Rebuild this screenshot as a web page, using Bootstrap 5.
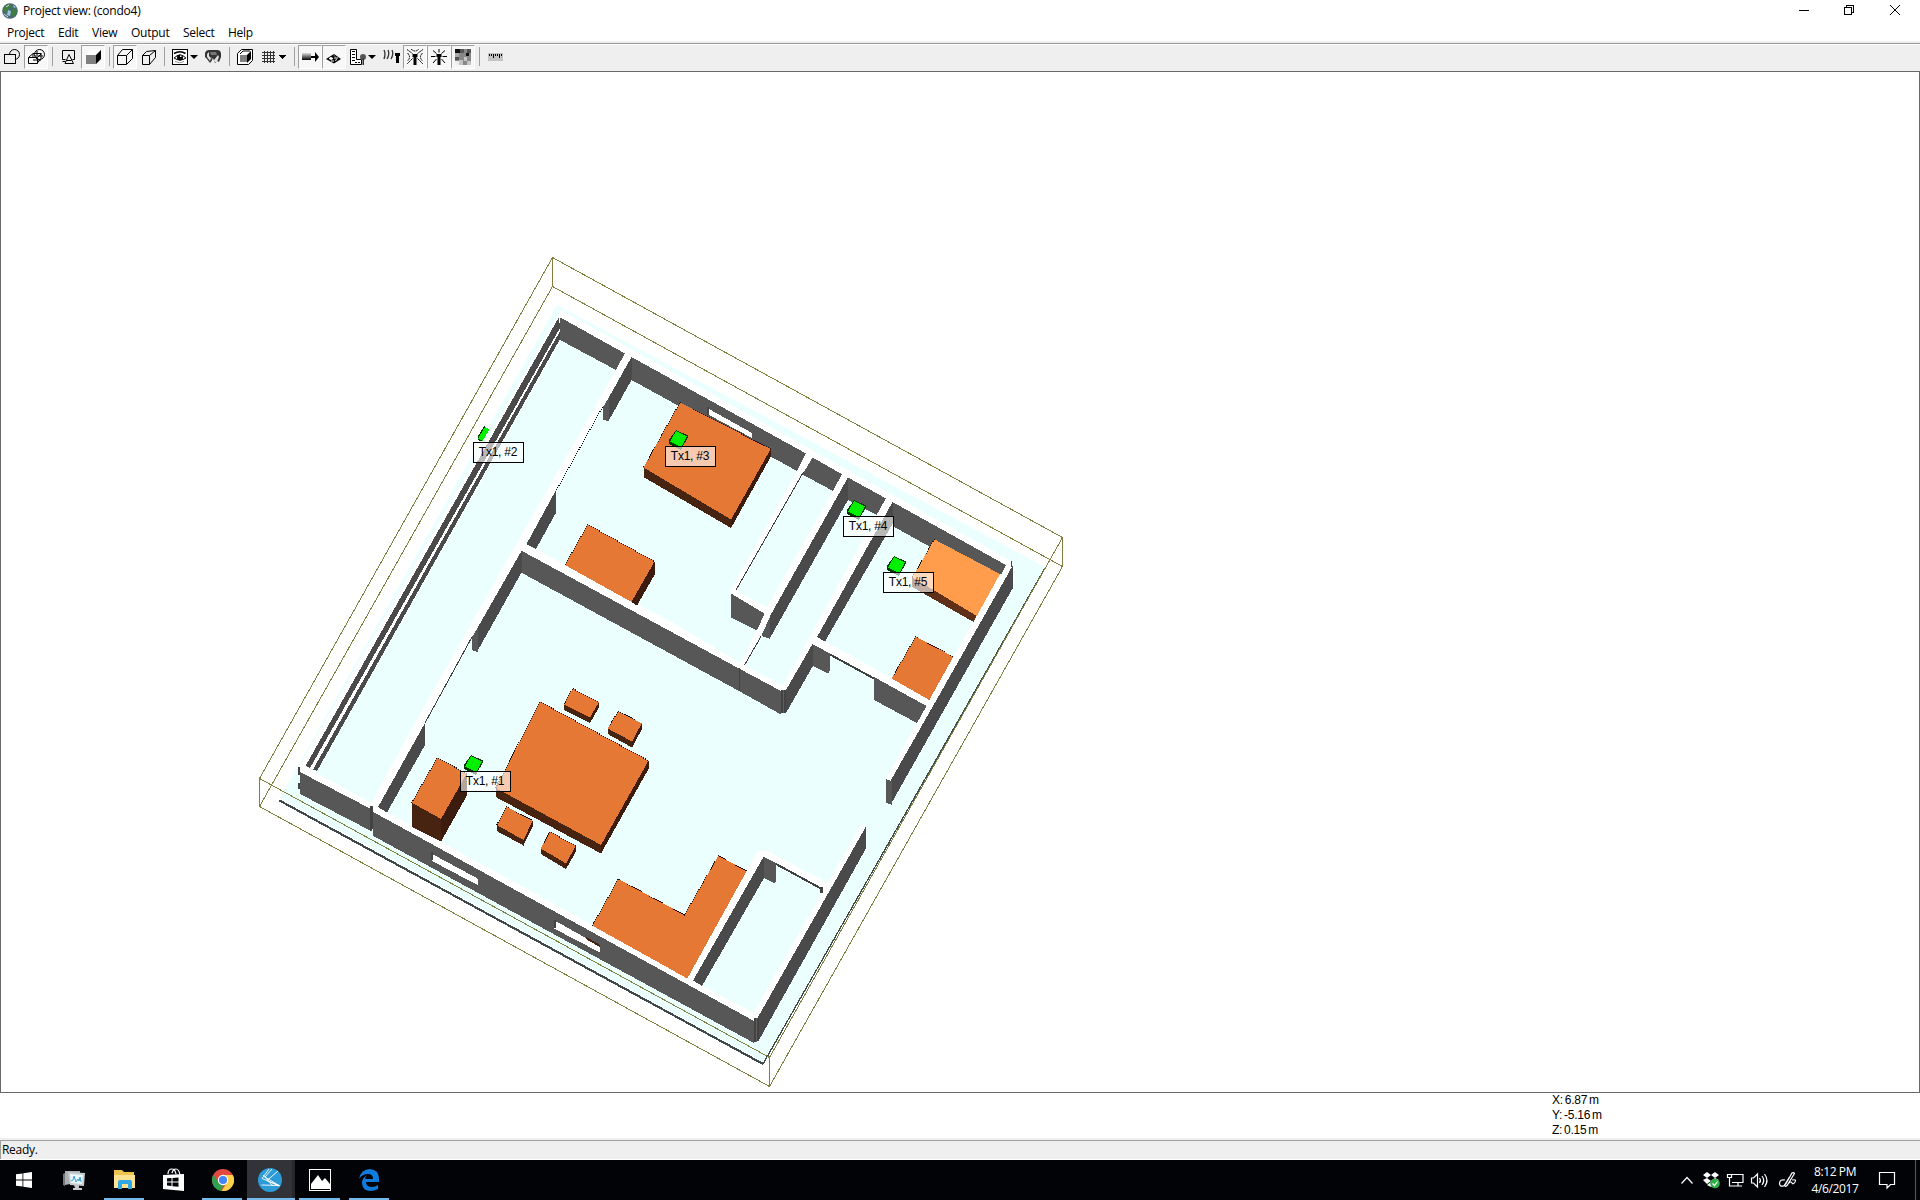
<!DOCTYPE html>
<html lang="en">
<head>
<meta charset="utf-8">
<title>Project view: (condo4)</title>
<link href="https://cdn.jsdelivr.net/npm/bootstrap@5.3.0/dist/css/bootstrap.min.css" rel="stylesheet">
<style>
body{font-family:"Open Sans","Noto Sans",sans-serif;font-size:12px;line-height:16px;color:#000;background:#fff;height:1200px;width:1920px}
.titlebar{height:22px;padding-left:2px}
.titlebar .caption{font-size:12px;letter-spacing:-.22px;margin-left:5px}
.winctl svg{display:block}
.menubar{height:19px;padding-left:7px;font-size:12px;letter-spacing:-.25px;line-height:22px}
.menubar a{color:#000;text-decoration:none;display:block;white-space:nowrap}
.toolstrip{height:30px;background:#efefef;position:relative;border-top:2px solid #efefef;border-bottom:1px solid #efefef}
.toolrow{border-top:1px solid #9a9a9a;box-shadow:inset 0 1px #fff;height:28px;padding-top:1px}
.tool{width:24px;height:24px;display:flex;align-items:center;justify-content:center;border:1px solid transparent;border-radius:0;padding:0;background:none;flex:none}
.tool.wide{width:33px}
.tool.on{background:#f7f7f7;border-color:#a0a0a0 #fff #fff #a0a0a0}
.sepbar{width:8px;flex:none;display:flex;justify-content:center}
.sepbar i{width:1px;height:19px;background:#a0a0a0;margin-top:2px}
.viewport{height:1022px;border:1px solid #696969;border-left-width:1px;background:#fff;overflow:hidden}
.txlabel{width:51px;height:21px;border:1px solid #000;background:rgba(255,255,255,.61);font:12px/18px "Liberation Sans",sans-serif;letter-spacing:-.25px;text-align:center;white-space:nowrap;padding-right:1px}
.readout{height:45px;padding:0 0 0 1552px;font:12px/15px "Liberation Sans",sans-serif;letter-spacing:-.25px;word-spacing:-1.2px}
.statusline{height:22px;background:#efefef;border-top:2px solid #efefef;border-bottom:1px solid #fff}
.statusline div{border-top:1px solid #a0a0a0;border-left:1px solid #a0a0a0;height:19px;padding-left:1px;line-height:18px;letter-spacing:-.3px}
.taskbar{height:40px;background:#010306;color:#fff}
.task{width:49px;height:40px;display:flex;align-items:center;justify-content:center;position:relative;flex:none}
.task.open::after{content:"";position:absolute;left:4px;right:5px;bottom:0;height:2px;background:#76b9ed}
.task.active{background:#313338;border-right:3px solid #25272b}
.task.active::after{left:0;right:-3px}
.tray svg{display:block}
.clock{font-size:12px;line-height:17px;letter-spacing:-.4px;width:60px;text-align:center}
</style>
<script src="https://cdn.jsdelivr.net/npm/bootstrap@5.3.0/dist/js/bootstrap.bundle.min.js"></script>
</head>
<body class="d-flex flex-column overflow-hidden">
<header class="titlebar d-flex align-items-center justify-content-between">
  <div class="d-flex align-items-center">
    <svg width="16" height="16" viewBox="0 0 16 16"><circle cx="8" cy="8" r="7.800" fill="#4a6878"/><path d="M3 3l4-2 3 1-1 3-3 2-3 3-2-3zM10 7l4-2 1 4-3 5-3-2z" fill="#3f7f42"/><path d="M6 7l3 1-1 5-3-1zM11 2l3 2-2 1z" fill="#9cc7de"/><path d="M2 11l4 3M4 4l3-2" stroke="#d5e3e4" fill="none"/></svg>
    <span class="caption">Project view: (condo4)</span>
  </div>
  <div class="winctl">
    <svg width="130" height="22" viewBox="1790 0 130 22" fill="none" stroke="#000" shape-rendering="crispEdges"><path d="M1799 10.500h10"/><rect x="1844.500" y="7.500" width="7" height="7"/><path d="M1846.500 7V5.500h7v7h-2"/><path d="M1890 5l10 10M1900 5l-10 10" shape-rendering="auto"/></svg>
  </div>
</header>
<nav class="menubar d-flex">
  <a style="width:51px">Project</a><a style="width:34px">Edit</a><a style="width:39px">View</a><a style="width:52px">Output</a><a style="width:45px">Select</a><a>Help</a>
</nav>
<div class="toolstrip">
 <div class="toolrow d-flex">
  <div class="tool"><svg width="16" height="16" fill="none" stroke="#000"><circle cx="10.500" cy="5.500" r="5"/><rect x=".5" y="5.500" width="11" height="9" fill="#efefef"/></svg></div>
  <div class="tool on"><svg width="17" height="16" fill="none" stroke="#000"><circle cx="11.500" cy="5.500" r="5"/><path d="M.5 8.500L5 4.500h8v5l-4 5M.5 8.500h9v6H.5zM9.500 8.500l4-4M5 5v3M5 11h8M9 2v4M7 7h8"/></svg></div>
  <div class="sepbar"><i></i></div>
  <div class="tool" style="width:25px"><svg width="14" height="15" fill="none" stroke="#000"><path d="M3.500 9.500h-3V.5h12v9h-2M.5 11.500h3M7 4.500l-4 9h8.500zM4.500 10.500h5"/></svg></div>
  <div class="tool on"><svg width="16" height="16"><path d="M1 6L5 1h11L11 6z" fill="#fff"/><rect x="1" y="6" width="10" height="9" fill="#808080"/><path d="M11 6l5-5v9l-5 5z"/></svg></div>
  <div class="sepbar"><i></i></div>
  <div class="tool on"><svg width="16" height="16" fill="none" stroke="#000"><path d="M.5 6.500h9v9h-9zM.5 6.500l5-6h10l-6 6M15.500.5v9l-6 6"/></svg></div>
  <div class="tool"><svg width="14" height="15" fill="none" stroke="#000"><path d="M.5 5.500h7v9h-7zM.5 5.500l4-4 9-1-6 5M13.500.5v7l-6 7"/></svg></div>
  <div class="sepbar" style="width:7px"><i></i></div>
  <div class="tool wide"><svg width="26" height="16"><rect x=".5" y=".5" width="15" height="15" fill="#fff" stroke="#000"/><path d="M2 4.500q6-3.500 11.500 0" fill="none" stroke="#000" stroke-width="1.500"/><path d="M2 9q6-6 12 0-6 4-12 0" fill="none" stroke="#000"/><circle cx="8" cy="8.500" r="3"/><path d="M8 6.500h1.500V8H8z" fill="#fff"/><path d="M3 12.500q5 2.500 9 0" stroke="#999" fill="none"/><path d="M18 6h8l-4 4z"/></svg></div>
  <div class="tool"><svg width="16" height="16"><path d="M0 4q1-3 4-3h8q4 0 4 4v3l-2 5-2-1-2 2-2-4-3 4-3-4-2-2z" fill="#333"/><path d="M2 5l2-2v4l2 2-1 3-3-4zM6 8l3 3 4-5 1 2-2 5h-2l-2-1z" fill="#ddd"/><path d="M5 3h6l1 3H6z" fill="#777"/></svg></div>
  <div class="sepbar"><i></i></div>
  <div class="tool"><svg width="16" height="16"><path d="M.5 4.500l4-4h11v11l-4 4H.5z" fill="#fff" stroke="#000"/><path d="M3 6h7v7H3z" fill="#808080"/><path d="M10 6l4-4v8l-4 4z"/><path d="M3 5l3-3h7" stroke="#000" fill="none"/></svg></div>
  <div class="tool wide"><svg width="24" height="14" shape-rendering="crispEdges"><path d="M2.500 1v12M5.500 1v12M8.500 1v12M11.500 1v12M0 2.500h13M0 5.500h13M0 8.500h13M0 11.500h13" stroke="#333"/><path d="M16 5h8l-4 4z"/></svg></div>
  <div class="sepbar"><i></i></div>
  <div class="tool on"><svg width="17" height="14"><defs><linearGradient id="fade" x2="0" y2="1"><stop stop-color="#ddd"/><stop offset="1"/></linearGradient></defs><rect y="3" width="9" height="7" fill="url(#fade)"/><path d="M9 6h4V2l4 5-4 5V8H9z"/></svg></div>
  <div class="tool on"><svg width="16" height="16"><path d="M0 10l8-5 7 5-7 4.500z"/><path d="M3 9.500l2-1 2 1-2 1zM8 9h4M8 6.500l1 1M9 11.500l2-1M5 12h3" fill="#fff" stroke="#fff"/></svg></div>
  <div class="tool wide"><svg width="26" height="16"><path d="M.5 15.500V.5h6v10h5v5z" fill="#fff" stroke="#000"/><path d="M3.500 2v12" stroke="#000" stroke-width="3" stroke-dasharray="1 2"/><path d="M5 13.500h7" stroke="#000" stroke-dasharray="2 1"/><circle cx="13" cy="8" r="3" fill="#555"/><path d="M12.500 9h1.500v7h-1.500z" fill="#333"/><path d="M18 6h8l-4 4z"/></svg></div>
  <div class="tool"><svg width="17" height="16" fill="none" stroke="#333" stroke-width="1.300"><path d="M1 1q2 4 0 9M5 1q2 4-1 9M9 1q2 4-1 9"/><path d="M12 4h5v3h-1v7h-3V7h-1z" fill="#000" stroke="none"/></svg></div>
  <div class="tool on"><svg width="16" height="16" fill="none" stroke="#000"><path d="M0 .5l5.500 4M16 .5l-5.500 4M4 0q4 4 8 0M.5 4q4 4 0 8M15.500 4q-4 4 0 8M5.500 9.500L0 15M10.500 9.500L16 15" stroke-dasharray="2 .7"/><path d="M5.500 5h5v3H9.500v8h-3V8h-1z" fill="#000" stroke="none"/></svg></div>
  <div class="tool on"><svg width="16" height="16" fill="none" stroke="#000"><path d="M8 0v3.500M2 1.500l3.500 3M14 1.500l-3.500 3M0 7.500h4.500M11.500 7.500H16M2 14l3.500-4M14 14l-3.500-4"/><path d="M5.500 5h5v3H9.500v8h-3V8h-1z" fill="#000" stroke="none"/></svg></div>
  <div class="tool on"><svg width="16" height="16" shape-rendering="crispEdges"><rect width="16" height="16" fill="#888"/><path d="M0 0h5v4H0zM11 4h3v3h-3z" fill="#111"/><path d="M5 0h4v4H5zM12 0h4v4h-4zM0 8h4v3H0z" fill="#555"/><path d="M9 8h3v4H9zM4 11h4v5H4zM12 12h4v4h-4z" fill="#c4c4c4"/><path d="M0 12h4v4H0z" fill="#eee"/><path d="M0 4h4v4H0z" fill="#aaa"/></svg></div>
  <div class="sepbar"><i></i></div>
  <div class="tool"><svg width="15" height="8" shape-rendering="crispEdges"><rect width="15" height="8" fill="#c3c3c3"/><path d="M1.500 1v2M3.500 1v2M5.500 1v4M7.500 1v2M9.500 1v2M11.500 1v4M13.500 1v2" stroke="#000"/></svg></div>
 </div>
</div>

<main class="viewport position-relative">
<svg width="1918" height="1020" viewBox="1 72 1918 1020" shape-rendering="crispEdges" class="d-block">
 <defs>
  <g id="tx"><path d="M11-16L4-6v4L16 4l7-13v-1.500z" fill="#063806"/><path d="M11-15L22-9.500 16.500 1 5-4.500z" fill="#00f000"/></g>
 </defs>
 <!-- slab -->
 <path d="M557 305L1045 567 763 1062 280 798z" fill="#ebffff"/>
 <!-- outer wall tops -->
 <path d="M561 310L1011 561 1012.500 566 891 781 886 779 929 700 1001 573 1006 565 559.500 317 305 766 387 812 703 986 753.500 1013 861.500 824 866 827 757.500 1019 754 1021 373 812 371 809 300 772 299 767z" fill="#fff"/>
 <!-- balcony rail -->
 <path d="M560 317v24L317 771 305 766z" fill="#fff"/>
 <path d="M559 317L560 328 310 768 305.500 766zM559.500 332v8L317 771 313 769.500z" fill="#4a4a4a"/>
 <!-- inner faces of the north wall -->
 <path d="M559.500 317L625 353.500 616 370 560 340zM631.500 357L806 453.500 797 471 631.500 380zM812.500 457.500L842.500 474.500 833 491 802.500 474.500zM848 477.500L886 498.500 877 515 848 500zM892.500 502L1006 565 1001 574.500 1000 574 950 548 934 549 892.500 526z" fill="#575757"/>
 <path d="M709 409L752 433v5L709 415z" fill="#fff"/>
 <path d="M707 407h2v8h-2z" fill="#444"/>
 <!-- partition tops -->
 <g fill="#fff">
  <path d="M625 353L631.500 357 602.500 407 556 491 525 545 522 551 472 637 425 723 377 808 369 807 415 723 513 550 616 370z"/>
  <path d="M526 543.500L565 565 633 601.500 670 621 742 664 783 685.500 808 640 886 498 892.500 502 817 637 825 641.500 892 678 930 700 927 706 812 644 786 690 781 691 739 668.500 521.500 551z"/>
  <path d="M806 453L812.500 457.500 803 473 736 590 767 607.500 833 491 842 474 848 477.500 770 617 744.500 665 740 664 757 630 764.500 613.500 730 593 730 591 797 471z"/>
  <path d="M760 850.500L768 851 829 884 823 890 764 857 693 981 687 979 757 852z"/>
 </g>
 <!-- partition faces, shaded side -->
 <path d="M631.500 357v23L608.500 421v-23zM555.500 491v22.500L536 549 526.500 544zM521.500 551v21.500L477.500 651v-23zM425 723v22L387 812.500 378 807zM848 477.500V500L770 638v-22zM892.500 502v22L825 641.500 817 637zM812.500 644v22.500L786 713v-23zM764 856v22L702 986 693 980.500zM1012.500 566v22.500L891 804v-24zM865.700 827v22L759 1040 757.500 1018z" fill="#4a4a4a"/>
 <!-- partition faces, lit side -->
 <path d="M602.500 408L608.500 398v23.500l-6-2zM472 637L477.500 628v24l-5.500-2zM522 551L739 668.500 781 691v23.500L739 691 522 573zM731 593.500L764.500 613.500 757 630.500 731 617.500zM762 634L770 617v22l-8-3zM812.500 644L830 653.500V670l-2 3.500L812.500 666zM874 677L926.500 706 917 723 874 700zM764 857L776 863v18l-2 2L764 878zM886 779L891.500 781v23.500L886 803zM300 772L371 809v22L300 794zM373.300 812L754 1021v22L373.300 836z" fill="#575757"/>
 <path d="M298 767h2v8h-2zM298 783h2v6h-2zM370 806h3v23h-1v2h-2zM738.500 668h1v23h-1zM820 887h3v6h-3zM1011 561h1v6h-1zM781 690h1.500v23H781zM784 690h2v23h-2zM754 1018h1.500v24H754zM757 1018h2v23h-2z" fill="#434343"/>
 <path d="M782.500 690h1.500v23h-1.500zM755.500 1018h1.500v24h-1.500z" fill="#606060"/>
 <g fill="none" stroke="#404040">
  <path d="M472 637L425 723M803.500 472L736 590M761 636.500L744.500 665"/>
  <path d="M830 654.500L874 678.500M776 864L822 889" stroke-width="2"/>
  <path d="M602.500 407L556 491" stroke="#000" stroke-dasharray="1.140 1.140"/>
 </g>
 <!-- street-side windows -->
 <path d="M433 854.500L477.500 878.500V885L432 861zM556.500 921.500L600 946v6.500L554 928.500z" fill="#fff"/>
 <path d="M431 852h2v8h-2zM554 920h2v8h-2z" fill="#444"/><path d="M586 938l14 8" stroke="#472411" stroke-width="2"/>
 <!-- furniture: front sides -->
 <path d="M643.500 467.500L731 519.500V528L643.500 477zM564 704L590 717.500v5.500L564 710zM607.700 728L632 741.500v6L607.700 734zM495.700 788L601 845v8.500L495.700 797zM496.700 825L523.500 840v5.500L496.700 831zM540.700 848L566 863.500v5.500L540.700 854zM411.700 802.500L441 819v22.500L411.700 827z" fill="#472411"/>
 <path d="M912.300 577L977 615.500 973.500 622 912.300 587z" fill="#5f2f17"/>
 <!-- furniture: right sides -->
 <path d="M770.700 449v8L731 528v-9zM654.500 561.500V575L637 605.500 631.500 602zM598.700 702.500v5.500L590 723v-5.500zM641.700 723.500v6L632 747.500v-6zM648.500 760.500V769L601 853.500V845zM532.700 820.500v6L523.500 845.500V840zM575.700 846v6L566 869v-6zM466.700 773.500V796L441 841.500V819z" fill="#3b1c0e"/>
 <!-- furniture: tops -->
 <path d="M680 402.300L770.700 449 731 519.500 643.500 467.500zM587.700 524.500L654.500 561.500 631.500 602 565 565zM572.700 688.500L598.700 702.500 590 717.500 564 704.300zM618.300 711L641.700 723.500 632 741.500 607.700 728.500zM540 701.700L648.500 760.700 601 845 495.700 788zM506.700 806.700L532.700 820.700 523.500 840 496.700 825zM550 831.700L575.700 846 566 863.500 540.700 848.500zM437.300 757.700L466.700 773.500 441 819 411.700 802.700zM618.300 879L684.500 915 718.300 855.700 746.700 871 687.300 978.500 592.300 925.700zM915.700 636.700L953.300 656.700 929.300 700 891.700 678.500z" fill="#e57835"/>
 <path d="M934.300 539.300L1000 574 976.700 616 912.300 577.300z" fill="#ff9d4d"/>
 <path d="M643.500 467.500L680 402.300 770.700 449M565 565L587.700 524.500 654.500 561.500M564 704.300L572.700 688.500 598.700 702.500M607.700 728.500L618.300 711 641.700 723.500M495.700 788L540 701.700 648.500 760.700M496.700 825L506.700 806.700 532.700 820.700M540.700 848.500L550 831.700 575.700 846M411.700 802.700L437.300 757.700 466.700 773.500M592.300 925.700L618.300 879 684.500 915 718.300 855.700 746.700 871M891.700 678.500L915.700 636.700 953.300 656.700M912.300 577.300L934.300 539.300" fill="none" stroke="#1c0d05" stroke-dasharray="1.140 1.140"/>
 <!-- slab edge -->
 <path d="M279.500 800.500L763 1064" stroke="#404a4a" stroke-width="2.200"/>
 <path d="M763 1064L1045 568" stroke="#404a4a" stroke-width="1.300"/>
 <!-- bounding box -->
 <path d="M552.500 257.500L1062.500 537.500 769.500 1057.500 259.500 778.500zM552.500 286.500L1062.500 566.500 769.500 1086.500 259.500 806.500zM552.500 257.500v29M1062.500 537.500v29M769.500 1057.500v29M259.500 778.500v28" fill="none" stroke="#808040"/>
 <!-- transmitters -->
 <use href="#tx" x="665" y="446"/><use href="#tx" x="843" y="516"/><use href="#tx" x="883" y="572"/><use href="#tx" x="460" y="771"/>
 <path d="M484 426L489 429 482 441.500 477.500 440v-3z" fill="#063806"/><path d="M485 427L489.500 429.500 482.500 441 478 438.500z" fill="#00f000"/>
</svg>
<div class="txlabel position-absolute" style="left:472px;top:370px">Tx1, #2</div>
<div class="txlabel position-absolute" style="left:664px;top:374px">Tx1, #3</div>
<div class="txlabel position-absolute" style="left:842px;top:444px">Tx1, #4</div>
<div class="txlabel position-absolute" style="left:882px;top:500px">Tx1, #5</div>
<div class="txlabel position-absolute" style="left:459px;top:699px">Tx1, #1</div>
</main>

<section class="readout"><div>X: 6.87 m</div><div>Y: -5.16 m</div><div>Z: 0.15 m</div></section>
<footer class="statusline"><div>Ready.</div></footer>

<div class="taskbar d-flex justify-content-between">
 <div class="d-flex">
  <div class="task" style="width:48px"><svg width="16" height="16" fill="#fff"><path d="M0 2.300L6.500 1.400V7.500H0zM7.300 1.300L16 0v7.500H7.300zM0 8.400h6.500v6.200L0 13.700zM7.300 8.400H16V16l-8.700-1.200z"/></svg></div>
  <div class="task" style="width:52px"><svg width="24" height="22"><path d="M3 2h15v11l-15 3z" fill="#aab0b2"/><path d="M1 5l2-1v13l-2-1z" fill="#777"/><path d="M6 3l17 1-1 13-14-1z" fill="#c9cdce"/><path d="M8 5l13 1-1 9-11-1z" fill="#eaf8ff"/><path d="M9 12l2-1 1-4 2 6 2-3 1 2 1-4 1 5" fill="none" stroke="#3a9ed1"/><path d="M12 16h5v3h3v2h-9v-2h2z" fill="#c5c8c9"/></svg></div>
  <div class="task open"><svg width="22" height="20"><path d="M0 2V0h8l2 2h10v16H0z" fill="#f0c34d"/><path d="M0 5h21v13H0z" fill="#fde391"/><path d="M4 19v-7q0-2 2-2h10q2 0 2 2v7h-4v-5H8v5z" fill="#2fa8e4"/></svg></div>
  <div class="task"><svg width="22" height="24"><path d="M5 6q0-5 4-5 3 0 4 5M9 5q1-4 4-4t4 6" fill="none" stroke="#fff" stroke-width="1.200"/><path d="M0 7l21-1v17L0 21z" fill="#fff"/><path d="M4 10.300l4.500-.3v3.500H4zM9.500 9.900l6-.4v4h-6zM4 14.500h4.500V18L4 17.600zM9.500 14.500h6v4.300l-6-.6z" fill="#010306"/></svg></div>
  <div class="task open"><svg width="22" height="22" viewBox="0 0 22 22"><circle cx="11" cy="11" r="11" fill="#e24a3f"/><path d="M1.500 5.500L6.500 14 11 16 9.500 22A11 11 0 0 1 1.500 5.500z" fill="#2da14d"/><path d="M11 6h9.800A11 11 0 0 1 9.500 22L15.500 13z" fill="#fdd045"/><circle cx="11" cy="11" r="5.200" fill="#fff"/><circle cx="11" cy="11" r="4.100" fill="#4285f4"/></svg></div>
  <div class="task open active" style="width:48px"><svg width="24" height="24" fill="none" stroke="#fff" stroke-width=".9"><circle cx="12" cy="12" r="12" fill="#2d9bd5" stroke="none"/><path d="M11 1L4 10.500 21 17.500 3.500 17M14 1L7 9 22 18M20 3L9 12.500 21 18M5 7l10 11"/></svg></div>
  <div class="task open" style="width:50px"><svg width="22" height="22"><rect x=".5" y=".5" width="21" height="21" fill="#010306" stroke="#fff"/><path d="M2 20v-5l7-9 4 6 3-3 5 6v5z" fill="#fff"/></svg></div>
  <div class="task open"><svg width="22" height="22" viewBox="0 0 22 22"><path d="M0 10Q2 0 11 0q9 1 9 9v4H7q0 5 6 5 3 0 6-2v4q-4 2-8 2-8-1-8-8 0-5 5-8-2 2-2 4h8q0-5-5-5Q3 5 0 10z" fill="#0f7bdc"/></svg></div>
 </div>
 <div class="tray d-flex align-items-center">
  <svg width="125" height="40" viewBox="1675 0 125 40" fill="none" stroke="#fff" stroke-width="1.200">
   <path d="M1681.500 23.500l5.500-6 5.500 6"/>
   <path d="M1703 15l4-3 4 3-4 3zM1711 15l4-3 4 3-4 3zM1703 20l4-2 4 3-4 3zM1711 21l4-3 4 2-4 3zM1707 25l4-3 4 3-4 2z" fill="#fff" stroke="none"/><circle cx="1715" cy="23.500" r="4.800" fill="#2fae49" stroke="none"/><path d="M1712.500 23.500l2 2 3-4"/>
   <path d="M1732 14.500h11v8h-11M1727.500 14.500h4v3h-4zM1729.500 17.500v8.500h5M1738 22.500v3M1734 26h8"/>
   <path d="M1751.500 18v5h2l4 4V14l-4 4zM1759.500 18q2 2.500 0 5M1762 16q3.500 4.500 0 9M1764.500 14q5 6.500 0 13"/>
   <path d="M1785 20q-5-1-5.500 3 0 4 4 3 2-1 4-5l4.500-8q1.500-1 2.500.5l-7.500 12q-2 2-2.500-.5l5-8M1789 23q2-2 3 0t3-1-3-2"/>
  </svg>
  <div class="clock" style="margin-left:5px"><div>8:12 PM</div><div>4/6/2017</div></div>
  <svg width="55" height="40" viewBox="1865 0 55 40" fill="none" stroke="#fff" stroke-width="1.200"><path d="M1879.500 12.500h15v12h-4l-3.500 3.500v-3.500h-7.500z"/><path d="M1915.500 0v40" stroke="#50545a"/></svg>
 </div>
</div>
</body>
</html>
